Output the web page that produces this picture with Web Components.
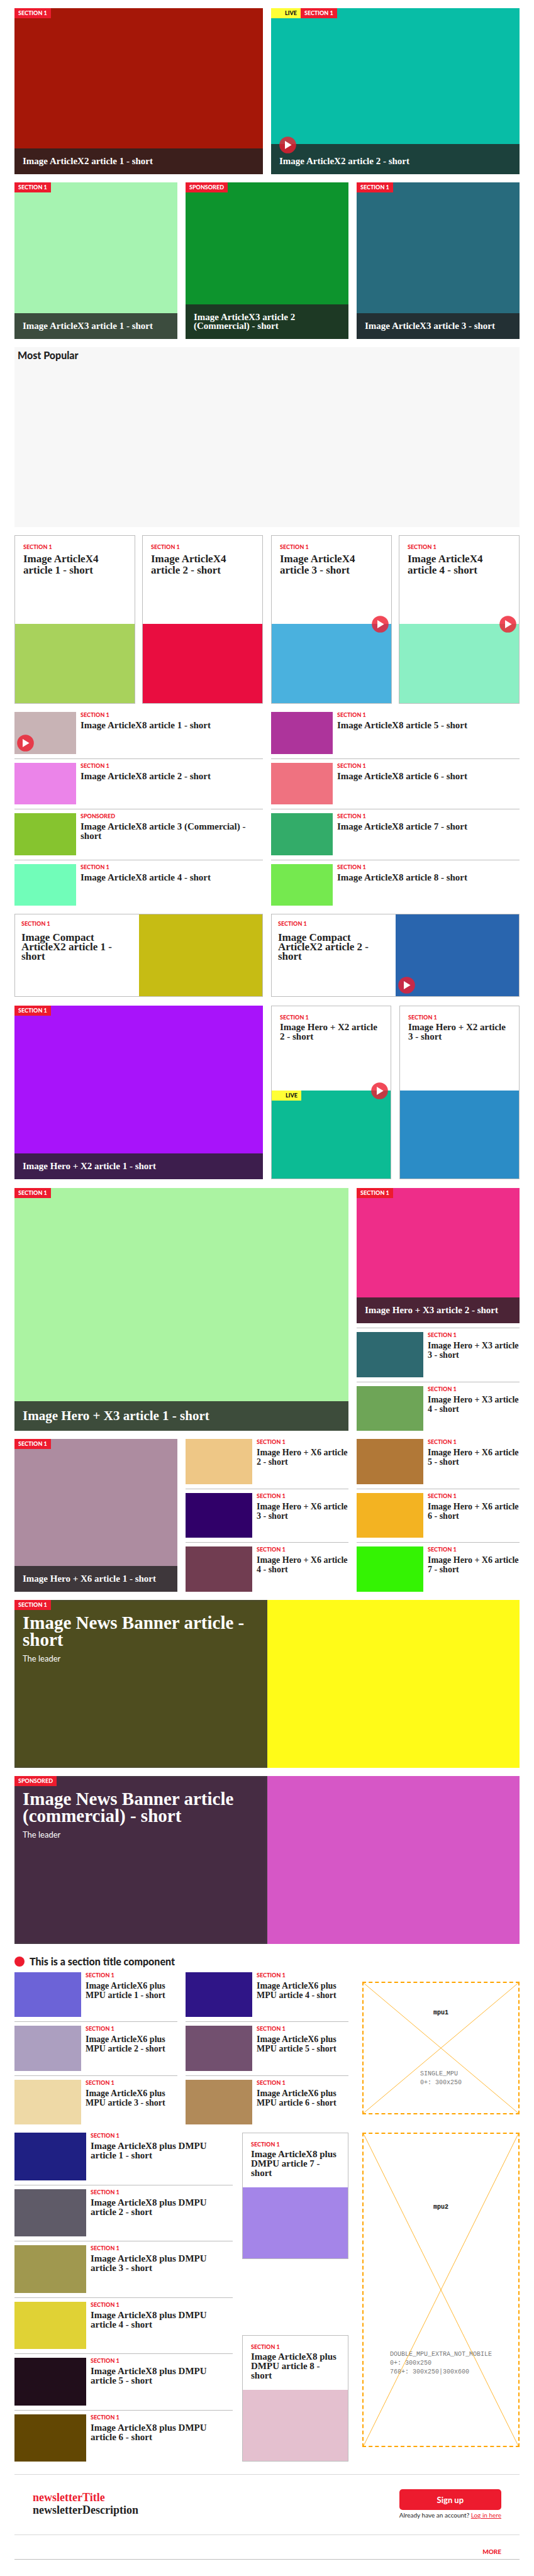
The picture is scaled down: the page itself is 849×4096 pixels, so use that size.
<!DOCTYPE html>
<html lang="en">
<head>
<meta charset="utf-8">
<meta name="viewport" content="width=device-width, initial-scale=1">
<title>Article slices</title>
<style>
  body { margin: 0; background: #fff; color: #222; font-family: "Liberation Serif", "Times New Roman", serif; }
</style>
</head>
<body>
<slice-page></slice-page>

<script>
const RED = '#ed1b2e';
const RULE = '#bdbdbd';

const base = `
  *, *::before { box-sizing: border-box; }
  :host { display: block; box-sizing: border-box; min-width: 0; }
  a { color: inherit; text-decoration: none; }
  h2, h3, p { margin: 0; }
  .sans { font-family: Lato, sans-serif; }
  .label { font: 900 9px/9px Lato, sans-serif; color: ${RED}; text-transform: uppercase; }
`;

function define(name, build) {
  customElements.define(name, class extends HTMLElement {
    connectedCallback() {
      if (this.shadowRoot) return;
      const { css, html } = build(this);
      this.attachShadow({ mode: 'open' }).innerHTML = `<style>${base}${css}</style>${html}`;
    }
  });
}

/* Round video marker */
define('play-icon', () => ({
  css: `:host { width: 27px; height: 27px; } svg { display: block; }`,
  html: `<svg width="27" height="27" viewBox="0 0 27 27" aria-hidden="true">
    <circle cx="13.5" cy="13.5" r="13.3" fill="#ed1b2e" fill-opacity=".8"/>
    <path d="M9 7 19.6 13.5 9 20z" fill="#fff"/></svg>`
}));

/* Flag shown in the corner of an image */
define('flag-label', el => ({
  css: `
    :host { display: inline-block; padding: 0 6px; background: ${RED}; color: #fff; font: 900 9px/16px Lato, sans-serif; vertical-align: top; }
    :host([live]) { background: #ffff36; color: #111; padding-left: 22px; }`,
  html: `<slot></slot>`
}));

/* Image with a translucent caption bar */
define('overlay-card', el => ({
  css: `
    a { display: flex; flex-direction: column; justify-content: space-between; height: 100%; background: ${el.getAttribute('color')}; color: #fff; }
    .flags { display: flex; }
    .bar { position: relative; padding: 13px 13px 14px; background: rgba(34,34,34,.8); }
    :host([play]) .bar { padding-top: 20px; }
    h3 { font-size: 15px; line-height: 14px; }
    :host([large]) h3 { font-size: 21px; line-height: 20px; }
    play-icon { position: absolute; left: 13px; top: -12px; }`,
  html: `<a href="#">
    <div class="flags">${el.hasAttribute('live') ? '<flag-label live>LIVE</flag-label>' : ''}<flag-label>${el.getAttribute('label')}</flag-label></div>
    <div class="bar">${el.hasAttribute('play') ? '<play-icon></play-icon>' : ''}<h3><slot></slot></h3></div></a>`
}));

/* Bordered card, text above image */
define('stacked-card', el => ({
  css: `
    a { display: flex; flex-direction: column; height: 100%; border: 1px solid ${RULE}; }
    .text { flex: 1; padding: 13px 13px 15px; }
    h3 { margin-top: 4px; font-size: 15px; line-height: 15px; }
    :host([roomy]) h3 { margin-top: 6px; font-size: 17px; line-height: 18px; }
    .image { position: relative; flex: none; height: var(--image-height); background: ${el.getAttribute('color')}; }
    flag-label { display: block; width: fit-content; }
    play-icon { position: absolute; right: 4px; top: -13px; }`,
  html: `<a href="#"><div class="text"><div class="label">${el.getAttribute('label')}</div><h3><slot></slot></h3></div>
    <div class="image">${el.hasAttribute('live') ? '<flag-label live>LIVE</flag-label>' : ''}${el.hasAttribute('play') ? '<play-icon></play-icon>' : ''}</div></a>`
}));

/* Bordered card, text beside image */
define('compact-card', el => ({
  css: `
    a { display: grid; grid-template-columns: 1fr 1fr; height: 100%; border: 1px solid ${RULE}; }
    .text { padding: 10px; }
    h3 { margin-top: 10px; font-size: 17px; line-height: 15px; }
    .image { position: relative; background: ${el.getAttribute('color')}; }
    play-icon { position: absolute; left: 4px; bottom: 4px; }`,
  html: `<a href="#"><div class="text"><div class="label">${el.getAttribute('label')}</div><h3><slot></slot></h3></div>
    <div class="image">${el.hasAttribute('play') ? '<play-icon></play-icon>' : ''}</div></a>`
}));

/* Thumbnail with headline to its right */
define('row-card', el => ({
  css: `
    :host { flex: 1 1 0; }
    a { display: grid; grid-template-columns: var(--thumb, 106px) minmax(0, 1fr); column-gap: 7px; height: 100%; }
    .image { position: relative; background: ${el.getAttribute('color')}; }
    h3 { margin-top: 5px; font-size: var(--row-font, 14px); line-height: 15px; }
    play-icon { position: absolute; left: 4px; bottom: 4px; }`,
  html: `<a href="#"><div class="image">${el.hasAttribute('play') ? '<play-icon></play-icon>' : ''}</div>
    <div><div class="label">${el.getAttribute('label')}</div><h3><slot></slot></h3></div></a>`
}));

/* Column of row cards split by rules */
define('row-list', () => ({
  css: `
    :host { display: flex; flex-direction: column; }
    ::slotted(hr) { width: 100%; margin: 7px 0 6px; border: 0; border-top: 1px solid ${RULE}; }`,
  html: `<slot></slot>`
}));

define('news-banner', el => ({
  css: `
    a { display: grid; grid-template-columns: 1fr 1fr; min-height: 267px; background: ${el.getAttribute('color')}; color: #fff; }
    .panel { background: rgba(34,34,34,.8); box-shadow: inset 0 0 4px rgba(74,74,74,.9); }
    flag-label { display: block; width: fit-content; }
    h2 { padding: 7px 13px; font-size: 29px; line-height: 27px; }
    p { padding: 0 13px; font-size: 13px; line-height: 18px; }`,
  html: `<a href="#"><div class="panel"><flag-label>${el.getAttribute('label')}</flag-label><h2><slot></slot></h2><p class="sans">The leader</p></div></a>`
}));

/* Placeholder frame for an advert */
define('ad-slot', () => ({
  css: `
    :host { position: relative; display: flex; flex-direction: column; align-items: center; justify-content: space-around; margin-left: 9px; border: 2px dashed #ffa500; font: 10px/14px "Liberation Mono", monospace; }
    svg { position: absolute; inset: 0; width: 100%; height: 100%; }
    b { color: #111; }
    ::slotted(p) { margin: 0; color: #777; }`,
  html: `<svg viewBox="0 0 100 100" preserveAspectRatio="none" aria-hidden="true"><path d="M0 0 100 100M100 0 0 100" stroke="#ffa500" stroke-width="1" stroke-opacity=".8" vector-effect="non-scaling-stroke"/></svg>
    <b><slot name="name"></slot></b><slot></slot>`
}));

define('most-popular', () => ({
  css: `:host { min-height: 286px; padding: 3px 5px; background: #f7f7f7; } h2 { font-size: 16px; font-weight: 900; line-height: 20px; }`,
  html: `<h2 class="sans"><slot></slot></h2>`
}));

define('section-title', () => ({
  css: `
    h2 { display: flex; align-items: center; gap: 8px; font-size: 16px; font-weight: 900; line-height: 20px; }
    h2::before { content: ""; width: 16px; height: 16px; border-radius: 50%; background: ${RED}; }`,
  html: `<h2 class="sans"><slot></slot></h2>`
}));

define('newsletter-puff', () => ({
  css: `
    :host { display: flex; justify-content: space-between; align-items: center; min-height: 97px; padding: 0 29px; border: solid #d8d8d8; border-width: 1px 0; }
    .copy { padding-bottom: 4px; font: bold 18px/20px "Liberation Serif", serif; }
    .title { color: ${RED}; }
    .join { display: flex; flex-direction: column; font: 10px/16px Lato, sans-serif; min-width: 156px; }
    button { height: 33px; border: 0; border-radius: 5px; background: ${RED}; color: #fff; font: bold 13px/18px Lato, sans-serif; }
    .join a { color: ${RED}; text-decoration: underline; }`,
  html: `<div class="copy"><p class="title">newsletterTitle</p><p>newsletterDescription</p></div>
    <div class="join"><button type="button">Sign up</button><p>Already have an account? <a href="#">Log in here</a></p></div>`
}));

define('more-link', () => ({
  css: `:host { padding: 19px 29px 5px; border-bottom: 1px solid ${RULE}; text-align: right; font: 900 10px/14px Lato, sans-serif; color: ${RED}; }`,
  html: `<a href="#"><slot></slot></a>`
}));

const S = 'label="SECTION 1"';
const rows = items => items.map(([color, text, extra = S]) => `<row-card ${extra} color="${color}">${text}</row-card>`).join('<hr>');

define('slice-page', () => ({
  css: `
    :host { padding: 13px 23px 26px; }
    main { display: flex; flex-direction: column; gap: 13px; }
    .two, .three { display: grid; gap: 13px; grid-template-columns: repeat(2, minmax(0, 1fr)); }
    .three { grid-template-columns: repeat(3, minmax(0, 1fr)); }
    .pair { display: grid; gap: 11px; grid-template-columns: repeat(2, minmax(0, 1fr)); }
    .pair.wide { gap: 13px; }
    .wide2 { grid-column: span 2; }
    .x2 { min-height: 264px; }
    .x3 { min-height: 249px; }
    .x4 { min-height: 268px; --image-height: 126px; }
    .x8 { min-height: 308px; --thumb: 98px; --row-font: 15px; }
    .compact { min-height: 133px; padding-bottom: 1px; }
    .hero2 { min-height: 277px; padding-bottom: 1px; --image-height: 140px; }
    .hero3 { min-height: 386px; }
    .side { display: flex; flex-direction: column; }
    .side overlay-card { height: 215px; }
    .side hr { width: 100%; margin: 7px 0 6px; border: 0; border-top: 1px solid ${RULE}; }
    .side row-list { flex: 1; }
    .hero6 { min-height: 243px; }
    .mpu6 { min-height: 242px; }
    .mpu6 ad-slot { margin-top: 15px; height: 211px; }
    section-title { margin-top: 5px; margin-bottom: -6px; }
    .mpu8 { min-height: 523px; --thumb: 114px; --row-font: 15px; --image-height: 113px; }
    .mpu8 ad-slot { height: 500px; }
    .split { display: grid; gap: 15px; grid-template-columns: minmax(0, 1fr) 169px; }
    .cards { display: flex; flex-direction: column; justify-content: space-between; }
    newsletter-puff { margin-top: 7px; }
    more-link { margin-top: -13px; }`,
  html: `<main>
    <section class="two x2">
      <overlay-card ${S} color="#a51708">Image ArticleX2 article 1 - short</overlay-card>
      <overlay-card ${S} live play color="#08bda6">Image ArticleX2 article 2 - short</overlay-card>
    </section>
    <section class="three x3">
      <overlay-card ${S} color="#a6f3b1">Image ArticleX3 article 1 - short</overlay-card>
      <overlay-card label="SPONSORED" color="#0d942d">Image ArticleX3 article 2 (Commercial) - short</overlay-card>
      <overlay-card ${S} color="#286b7d">Image ArticleX3 article 3 - short</overlay-card>
    </section>
    <most-popular>Most Popular</most-popular>
    <section class="two x4">
      <div class="pair">
        <stacked-card roomy ${S} color="#a8d25c">Image ArticleX4 article 1 - short</stacked-card>
        <stacked-card roomy ${S} color="#e90d40">Image ArticleX4 article 2 - short</stacked-card>
      </div>
      <div class="pair">
        <stacked-card roomy play ${S} color="#4ab1de">Image ArticleX4 article 3 - short</stacked-card>
        <stacked-card roomy play ${S} color="#8befc4">Image ArticleX4 article 4 - short</stacked-card>
      </div>
    </section>
    <section class="two x8">
      <row-list>${rows([
        ['#c8b3b5', 'Image ArticleX8 article 1 - short', S + ' play'],
        ['#eb84e9', 'Image ArticleX8 article 2 - short'],
        ['#86c42f', 'Image ArticleX8 article 3 (Commercial) - short', 'label="SPONSORED"'],
        ['#71fdb9', 'Image ArticleX8 article 4 - short']])}</row-list>
      <row-list>${rows([
        ['#ad349b', 'Image ArticleX8 article 5 - short'],
        ['#ef7280', 'Image ArticleX8 article 6 - short'],
        ['#33ac69', 'Image ArticleX8 article 7 - short'],
        ['#75e94f', 'Image ArticleX8 article 8 - short']])}</row-list>
    </section>
    <section class="two compact">
      <compact-card ${S} color="#c6bc14">Image Compact ArticleX2 article 1 - short</compact-card>
      <compact-card play ${S} color="#2965ae">Image Compact ArticleX2 article 2 - short</compact-card>
    </section>
    <section class="two hero2">
      <overlay-card ${S} color="#a813fa">Image Hero + X2 article 1 - short</overlay-card>
      <div class="pair wide">
        <stacked-card live play ${S} color="#0cbb94">Image Hero + X2 article 2 - short</stacked-card>
        <stacked-card ${S} color="#2b8cc6">Image Hero + X2 article 3 - short</stacked-card>
      </div>
    </section>
    <section class="three hero3">
      <overlay-card class="wide2" large ${S} color="#abf3a2">Image Hero + X3 article 1 - short</overlay-card>
      <div class="side">
        <overlay-card ${S} color="#ee2d89">Image Hero + X3 article 2 - short</overlay-card>
        <hr>
        <row-list>${rows([
          ['#2e6970', 'Image Hero + X3 article 3 - short'],
          ['#6ea557', 'Image Hero + X3 article 4 - short']])}</row-list>
      </div>
    </section>
    <section class="three hero6">
      <overlay-card ${S} color="#ad8ca0">Image Hero + X6 article 1 - short</overlay-card>
      <row-list>${rows([
        ['#eec786', 'Image Hero + X6 article 2 - short'],
        ['#300069', 'Image Hero + X6 article 3 - short'],
        ['#713d51', 'Image Hero + X6 article 4 - short']])}</row-list>
      <row-list>${rows([
        ['#b17837', 'Image Hero + X6 article 5 - short'],
        ['#f3b322', 'Image Hero + X6 article 6 - short'],
        ['#34f303', 'Image Hero + X6 article 7 - short']])}</row-list>
    </section>
    <news-banner ${S} color="#fffb18">Image News Banner article - short</news-banner>
    <news-banner label="SPONSORED" color="#d657c6">Image News Banner article (commercial) - short</news-banner>
    <section-title>This is a section title component</section-title>
    <section class="three mpu6">
      <row-list>${rows([
        ['#6c63d7', 'Image ArticleX6 plus MPU article 1 - short'],
        ['#ac9fc0', 'Image ArticleX6 plus MPU article 2 - short'],
        ['#eed9a6', 'Image ArticleX6 plus MPU article 3 - short']])}</row-list>
      <row-list>${rows([
        ['#2f1587', 'Image ArticleX6 plus MPU article 4 - short'],
        ['#72506f', 'Image ArticleX6 plus MPU article 5 - short'],
        ['#b18a59', 'Image ArticleX6 plus MPU article 6 - short']])}</row-list>
      <ad-slot><span slot="name">mpu1</span><p>SINGLE_MPU<br>0+: 300x250</p></ad-slot>
    </section>
    <section class="three mpu8">
      <div class="wide2 split">
        <row-list>${rows([
          ['#1f2083', 'Image ArticleX8 plus DMPU article 1 - short'],
          ['#5f5b68', 'Image ArticleX8 plus DMPU article 2 - short'],
          ['#a0984f', 'Image ArticleX8 plus DMPU article 3 - short'],
          ['#e0d235', 'Image ArticleX8 plus DMPU article 4 - short'],
          ['#210e1b', 'Image ArticleX8 plus DMPU article 5 - short'],
          ['#624703', 'Image ArticleX8 plus DMPU article 6 - short']])}</row-list>
        <div class="cards">
          <stacked-card ${S} color="#a485e8">Image ArticleX8 plus DMPU article 7 - short</stacked-card>
          <stacked-card ${S} color="#e4c0cf">Image ArticleX8 plus DMPU article 8 - short</stacked-card>
        </div>
      </div>
      <ad-slot><span slot="name">mpu2</span><p>DOUBLE_MPU_EXTRA_NOT_MOBILE<br>0+: 300x250<br>768+: 300x250|300x600</p></ad-slot>
    </section>
    <newsletter-puff></newsletter-puff>
    <more-link>MORE</more-link>
  </main>`
}));
</script>
</body>
</html>
